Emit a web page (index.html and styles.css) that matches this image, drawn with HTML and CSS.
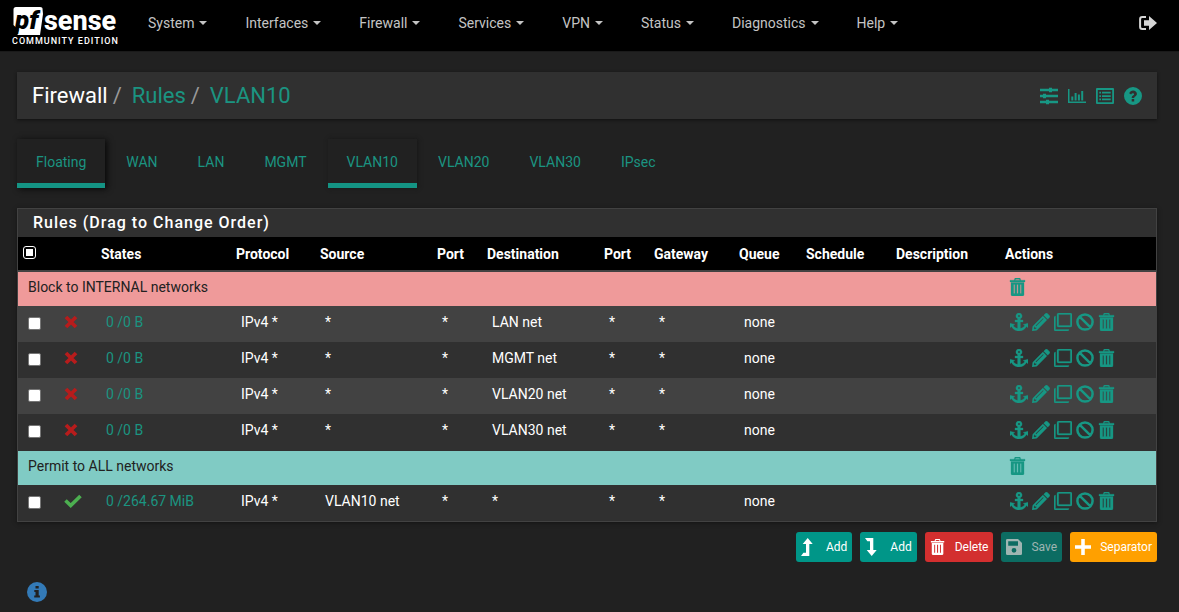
FILE: index.html
```
<!DOCTYPE html>
<html lang="en">
<head>
<meta charset="utf-8">
<title>Firewall: Rules: VLAN10</title>
<link rel="stylesheet" href="styles.css">
</head>
<body>
<svg class="sprite" aria-hidden="true">
  <symbol id="anchor" viewBox="0 0 18 18"><path fill-rule="evenodd" d="M9 0a3 3 0 0 1 1.400 5.700V7H13v2h-2.600v6.300c2.200-.3 3.700-1.300 4.300-2.500L13.200 11.400 18 10.200v4.600l-1.500-1.300C15.200 16.200 12.400 18 9 18s-6.200-1.800-7.500-4.500L0 14.800v-4.600l4.800 1.200-1.500 1.400c.6 1.200 2.100 2.200 4.300 2.500V9H5V7h2.600V5.700A3 3 0 0 1 9 0zm0 1.900a1.100 1.100 0 1 0 0 2.200 1.100 1.100 0 0 0 0-2.200z"/></symbol>
  <symbol id="pencil" viewBox="0 0 18 18"><path fill-rule="evenodd" d="M13.400.6a1.500 1.500 0 0 1 2.100 0l1.900 1.900a1.500 1.500 0 0 1 0 2.100l-1.700 1.700-4-4zM10.900 3.100l4 4L4.800 17.200 0 18l.8-4.800zM11 5.200L3.600 12.600l.6.600L11.600 5.800zM2.200 13.800l-.4 1.600.8.800 1.600-.4V14.600H3v-.8z"/></symbol>
  <symbol id="clone" viewBox="0 0 18 18"><path fill-rule="evenodd" d="M4.500 0h12A1.500 1.500 0 0 1 18 1.500v11a1.500 1.500 0 0 1-1.500 1.500h-12A1.500 1.500 0 0 1 3 12.500v-11A1.500 1.500 0 0 1 4.500 0zm.2 1.600v10.800h11.600V1.600zM0 4.500A1.500 1.500 0 0 1 1.500 3v13.400H15a1.500 1.500 0 0 1-1.500 1.500h-12A1.500 1.500 0 0 1 0 16.400z"/></symbol>
  <symbol id="ban" viewBox="0 0 18 18"><path d="M9 1.400a7.600 7.600 0 1 0 0 15.200A7.600 7.600 0 0 0 9 1.400zM3.800 3.800l10.400 10.400" fill="none" stroke="currentColor" stroke-width="2.500"/></symbol>
  <symbol id="trash" viewBox="0 0 18 18"><path fill-rule="evenodd" d="M6 0h5l.9 2.200H16v1.800H1V2.200h4.100zm.7 1.200l-.4 1h4.400l-.4-1zM2 4.600h13v11.900a1.500 1.500 0 0 1-1.500 1.500h-10A1.500 1.500 0 0 1 2 16.500zM4.700 6.500v9h1.100v-9zm3.200 0v9h1.200v-9zm3.300 0v9h1.100v-9z"/></symbol>
  <symbol id="sliders" viewBox="0 0 18 18"><path d="M0 1.800h9V.8h3v1h6v2.400h-6v1H9v-1H0zM0 7.800h3v-1h3v1h12v2.400H6v1H3v-1H0zM0 13.800h6v-1h3v1h9v2.400H9v1H6v-1H0z"/></symbol>
  <symbol id="chart" viewBox="0 0 18 18"><path d="M0 2h1.500v12.500H18V16H0zM3.300 9.500h2v4h-2zM6.600 6h2v7.500h-2zM9.900 7.500h2v6h-2zM13.200 4h2v9.500h-2z"/></symbol>
  <symbol id="list" viewBox="0 0 18 18"><path fill-rule="evenodd" d="M1 1h16a1 1 0 0 1 1 1v14a1 1 0 0 1-1 1H1a1 1 0 0 1-1-1V2a1 1 0 0 1 1-1zm.8 2v12.200h14.400V3zM3.300 4.800h1.700v1.700H3.300zM6 4.800h8.700v1.700H6zM3.300 8.200h1.700v1.700H3.300zM6 8.200h8.700v1.700H6zM3.300 11.600h1.700v1.700H3.300zM6 11.600h8.700v1.700H6z"/></symbol>
  <symbol id="help" viewBox="0 0 18 18"><path fill-rule="evenodd" d="M9 0a9 9 0 1 1 0 18A9 9 0 0 1 9 0zM5.200 6.300l1.900 1.200c.5-.8 1-1.200 1.800-1.200 1.500 0 1.600 1.300.5 2C8.300 8.900 7.700 9.500 7.700 11h2.500c0-.8.300-1 1-1.500 1-.6 1.700-1.400 1.700-2.700 0-1.900-1.800-3.200-3.800-3.200-1.700 0-3 .9-3.900 2.700zM7.700 12v2.400h2.500V12z"/></symbol>
  <symbol id="logout" viewBox="0 0 18 14"><path d="M7 1.100H3.300A2.200 2.200 0 0 0 1.100 3.300v7.400a2.200 2.200 0 0 0 2.200 2.200H7" fill="none" stroke="currentColor" stroke-width="2"/><path d="M5 4.300h5V0L18 7l-8 7V9.700H5z"/></symbol>
  <symbol id="cross" viewBox="0 0 14 14"><path d="M2 2l10 10M12 2L2 12" stroke="currentColor" stroke-width="3.800"/></symbol>
  <symbol id="check" viewBox="0 0 18 14"><path d="M1.500 6.500l5.200 5L16.500 2" fill="none" stroke="currentColor" stroke-width="3.600"/></symbol>
  <symbol id="up" viewBox="0 0 16 18"><path d="M0 18l2.400-3.200H5V6H1.700L6.700 0l5 6H8.300v12z"/></symbol>
  <symbol id="down" viewBox="0 0 16 18"><path d="M0 0h8.300v12h3.400l-5 6-5-6H5V3.200H2.400z"/></symbol>
  <symbol id="save" viewBox="0 0 18 18"><path fill-rule="evenodd" d="M2 0h11.500L18 4.500V16.500a1.500 1.500 0 0 1-1.500 1.500H1.500A1.500 1.500 0 0 1 0 16.500V1.500A1.500 1.500 0 0 1 1.500 0zm.5 2.500v5h11v-5zM9 10a2.700 2.700 0 1 0 0 5.400A2.700 2.700 0 0 0 9 10z"/></symbol>
  <symbol id="plus" viewBox="0 0 18 18"><path d="M7 0h4v7h7v4h-7v7H7v-7H0V7h7z"/></symbol>
  <symbol id="info" viewBox="0 0 20 20"><circle cx="10" cy="10" r="10"/><path fill="#212121" d="M8.500 4h3.200v2.600H8.500zM7.300 8h4.400v5.600h1.200v2H7.200v-2h1.300V10H7.300z"/></symbol>
</svg>

<header class="navbar">
  <a class="brand" href="#" aria-label="pfSense Community Edition">
    <svg class="mark" viewBox="0 0 106 30">
      <path fill="#fff" d="M4 1h24q3 0 2.600 3L31 8 28 29H5.500l1-5L1.500 19V3.500Q1.500 1 4 1z"/>
      <text class="pf" x="3" y="23">pf</text>
      <text class="sense" x="32" y="24">sense</text>
    </svg>
    <span class="edition">COMMUNITY EDITION</span>
  </a>
  <nav class="menu">
    <a href="#">System</a><a href="#">Interfaces</a><a href="#">Firewall</a><a href="#">Services</a><a href="#">VPN</a><a href="#">Status</a><a href="#">Diagnostics</a><a href="#">Help</a>
  </nav>
  <a class="logout" href="#" aria-label="Log out"><svg><use href="#logout"/></svg></a>
</header>

<main class="page">
  <div class="heading">
    <h1 class="crumbs"><span>Firewall</span><i>/</i><a href="#">Rules</a><i>/</i><a href="#">VLAN10</a></h1>
    <div class="tools">
      <a href="#" aria-label="Settings"><svg><use href="#sliders"/></svg></a>
      <a href="#" aria-label="Statistics"><svg><use href="#chart"/></svg></a>
      <a href="#" aria-label="Logs"><svg><use href="#list"/></svg></a>
      <a href="#" aria-label="Help"><svg><use href="#help"/></svg></a>
    </div>
  </div>

  <nav class="tabs">
    <a class="active hover" href="#">Floating</a><a href="#">WAN</a><a href="#">LAN</a><a href="#">MGMT</a><a class="active" href="#">VLAN10</a><a href="#">VLAN20</a><a href="#">VLAN30</a><a href="#">IPsec</a>
  </nav>

  <section class="panel">
    <h2>Rules (Drag to Change Order)</h2>
    <table>
      <colgroup><col class="w-check"><col class="w-icon"><col class="w-states"><col class="w-proto"><col class="w-addr"><col class="w-port"><col class="w-addr"><col class="w-port"><col class="w-gate"><col class="w-queue"><col class="w-sched"><col class="w-desc"><col></colgroup>
      <thead>
        <tr><th><input class="all" type="checkbox" aria-label="Select all rules"></th><th></th><th>States</th><th>Protocol</th><th>Source</th><th>Port</th><th>Destination</th><th>Port</th><th>Gateway</th><th>Queue</th><th>Schedule</th><th>Description</th><th>Actions</th></tr>
      </thead>
      <tbody>
        <tr class="separator red"><td colspan="12">Block to INTERNAL networks</td><td><div class="actions solo"><a href="#" aria-label="Delete separator"><svg><use href="#trash"/></svg></a></div></td></tr>
        <tr class="odd"><td><input type="checkbox" aria-label="Select LAN rule"></td><td><svg class="cross"><use href="#cross"/></svg></td><td><a href="#">0 /0 B</a></td><td>IPv4 *</td><td>*</td><td>*</td><td>LAN net</td><td>*</td><td>*</td><td>none</td><td></td><td></td><td><div class="actions"><a href="#" aria-label="Move"><svg><use href="#anchor"/></svg></a><a href="#" aria-label="Edit"><svg><use href="#pencil"/></svg></a><a href="#" aria-label="Copy"><svg><use href="#clone"/></svg></a><a href="#" aria-label="Disable"><svg><use href="#ban"/></svg></a><a href="#" aria-label="Delete"><svg><use href="#trash"/></svg></a></div></td></tr>
        <tr><td><input type="checkbox" aria-label="Select MGMT rule"></td><td><svg class="cross"><use href="#cross"/></svg></td><td><a href="#">0 /0 B</a></td><td>IPv4 *</td><td>*</td><td>*</td><td>MGMT net</td><td>*</td><td>*</td><td>none</td><td></td><td></td><td><div class="actions"><a href="#" aria-label="Move"><svg><use href="#anchor"/></svg></a><a href="#" aria-label="Edit"><svg><use href="#pencil"/></svg></a><a href="#" aria-label="Copy"><svg><use href="#clone"/></svg></a><a href="#" aria-label="Disable"><svg><use href="#ban"/></svg></a><a href="#" aria-label="Delete"><svg><use href="#trash"/></svg></a></div></td></tr>
        <tr class="odd"><td><input type="checkbox" aria-label="Select VLAN20 rule"></td><td><svg class="cross"><use href="#cross"/></svg></td><td><a href="#">0 /0 B</a></td><td>IPv4 *</td><td>*</td><td>*</td><td>VLAN20 net</td><td>*</td><td>*</td><td>none</td><td></td><td></td><td><div class="actions"><a href="#" aria-label="Move"><svg><use href="#anchor"/></svg></a><a href="#" aria-label="Edit"><svg><use href="#pencil"/></svg></a><a href="#" aria-label="Copy"><svg><use href="#clone"/></svg></a><a href="#" aria-label="Disable"><svg><use href="#ban"/></svg></a><a href="#" aria-label="Delete"><svg><use href="#trash"/></svg></a></div></td></tr>
        <tr><td><input type="checkbox" aria-label="Select VLAN30 rule"></td><td><svg class="cross"><use href="#cross"/></svg></td><td><a href="#">0 /0 B</a></td><td>IPv4 *</td><td>*</td><td>*</td><td>VLAN30 net</td><td>*</td><td>*</td><td>none</td><td></td><td></td><td><div class="actions"><a href="#" aria-label="Move"><svg><use href="#anchor"/></svg></a><a href="#" aria-label="Edit"><svg><use href="#pencil"/></svg></a><a href="#" aria-label="Copy"><svg><use href="#clone"/></svg></a><a href="#" aria-label="Disable"><svg><use href="#ban"/></svg></a><a href="#" aria-label="Delete"><svg><use href="#trash"/></svg></a></div></td></tr>
        <tr class="separator teal"><td colspan="12">Permit to ALL networks</td><td><div class="actions solo"><a href="#" aria-label="Delete separator"><svg><use href="#trash"/></svg></a></div></td></tr>
        <tr><td><input type="checkbox" aria-label="Select permit rule"></td><td><svg class="check"><use href="#check"/></svg></td><td><a href="#">0 /264.67 MiB</a></td><td>IPv4 *</td><td>VLAN10 net</td><td>*</td><td>*</td><td>*</td><td>*</td><td>none</td><td></td><td></td><td><div class="actions"><a href="#" aria-label="Move"><svg><use href="#anchor"/></svg></a><a href="#" aria-label="Edit"><svg><use href="#pencil"/></svg></a><a href="#" aria-label="Copy"><svg><use href="#clone"/></svg></a><a href="#" aria-label="Disable"><svg><use href="#ban"/></svg></a><a href="#" aria-label="Delete"><svg><use href="#trash"/></svg></a></div></td></tr>
      </tbody>
    </table>
  </section>

  <div class="buttons">
    <button type="button"><svg><use href="#up"/></svg>Add</button>
    <button type="button"><svg><use href="#down"/></svg>Add</button>
    <button type="button" class="danger"><svg><use href="#trash"/></svg>Delete</button>
    <button type="button" disabled><svg><use href="#save"/></svg>Save</button>
    <button type="button" class="warning"><svg><use href="#plus"/></svg>Separator</button>
  </div>

  <a class="info" href="#" aria-label="Information"><svg><use href="#info"/></svg></a>
</main>
</body>
</html>
```
FILE: styles.css
```
* { box-sizing: border-box; }

body {
  margin: 0;
  background: #212121;
  color: #fff;
  font: 14px/20px Roboto, sans-serif;
}

a { color: #1b9481; text-decoration: none; }
svg { display: block; fill: currentColor; }
.sprite { display: none; }

/* Top bar */
.navbar {
  display: flex;
  align-items: center;
  height: 52px;
  padding: 0 22px 0 12px;
  background: #000;
  border-bottom: 1px solid #1a1a1a;
}
.brand {
  display: flex;
  flex-direction: column;
  width: 106px;
  margin-right: 30px;
  padding-top: 1px;
  color: #fff;
}
.mark { width: 106px; height: 30px; }
.pf { font: italic 900 26px Roboto, sans-serif; fill: #000; }
.sense { font: 800 27px Roboto, sans-serif; fill: #fff; }
.edition { font-size: 9px; font-weight: 500; line-height: 11px; letter-spacing: 1px; white-space: nowrap; }
.menu { display: flex; gap: 38px; padding-bottom: 6px; }
.menu a { display: flex; align-items: center; gap: 5px; color: #c4c4c4; }
.menu a::after {
  content: "";
  border: 4px solid transparent;
  border-top-color: currentColor;
  border-bottom: 0;
}
.logout { margin-left: auto; padding-bottom: 5px; color: #d6d6d6; }
.logout svg { width: 18px; height: 14px; }

.page { padding: 20px 22px 10px 17px; }

/* Page heading */
.heading {
  display: flex;
  align-items: center;
  justify-content: space-between;
  height: 47px;
  padding: 0 15px;
  background: #303030;
  box-shadow: 0 1px 3px #111;
}
.crumbs { display: flex; margin: 0; font-size: 22px; font-weight: 400; line-height: 26px; }
.crumbs i { margin: 0 10px 0 5px; color: #999; font-style: normal; }
.tools { display: flex; gap: 10px; }
.tools a { color: #179784; }
.tools svg { width: 18px; height: 18px; }

/* Tabs */
.tabs { display: flex; gap: 2px; margin-top: 20px; }
.tabs a { height: 49px; padding: 13px 19px 0; }
.tabs .active { border-bottom: 5px solid #149484; box-shadow: 1px 0 4px #161616; }
.tabs .hover { box-shadow: 2px 1px 6px #080808; }

/* Rules table */
.panel {
  margin-top: 20px;
  background: #303030;
  border: 1px solid #424242;
  box-shadow: 0 1px 4px #141414;
}
.panel h2 {
  margin: 0;
  padding: 4px 15px;
  font-size: 16px;
  font-weight: 500;
  line-height: 20px;
  letter-spacing: 1px;
}
table { width: 100%; border-collapse: separate; border-spacing: 0; table-layout: fixed; }
.w-check { width: 36px; }
.w-icon { width: 42px; }
.w-states { width: 135px; }
.w-proto { width: 84px; }
.w-addr { width: 117px; }
.w-port { width: 50px; }
.w-gate { width: 85px; }
.w-queue { width: 67px; }
.w-sched { width: 90px; }
.w-desc { width: 109px; }
th {
  height: 35px;
  padding: 0 5px;
  background: #000;
  border-bottom: 2px solid #424242;
  font-weight: 700;
  text-align: left;
  white-space: nowrap;
}
td {
  height: 36px;
  padding: 5px 10px 0;
  border-top: 1px solid #303030;
  font-weight: 400;
  vertical-align: top;
  white-space: nowrap;
}
.odd td { background: #424242; border-color: #424242; }
.separator td { height: 35px; color: #212121; }
.red td { height: 34px; padding-top: 4px; background: #ef9a9a; border-color: #ef9a9a; }
.teal td { background: #80cbc4; }

input {
  display: grid;
  place-content: center;
  appearance: none;
  width: 13px;
  height: 13px;
  margin: 5px 0 0;
  background: #fff;
  border: 1px solid #767676;
  border-radius: 2px;
}
.all { margin: 0 0 2px; background: #000; border: 1px solid #fff; border-radius: 3px; }
.all::before { content: ""; width: 7px; height: 7px; background: #fff; }

.cross { width: 14px; height: 14px; margin-top: 3px; color: #b71c1c; }
.check { width: 18px; height: 14px; margin-top: 3px; color: #4caf50; }
.actions { display: flex; gap: 4px; padding-top: 1px; }
.actions a { color: #179784; }
.actions svg { width: 18px; height: 18px; stroke: currentColor; stroke-width: 0.3; }
.solo { margin-left: -1px; }

/* Buttons under the table */
.buttons { display: flex; justify-content: flex-end; flex-wrap: wrap; gap: 8px; margin-top: 10px; }
button {
  display: flex;
  align-items: center;
  gap: 9px;
  height: 30px;
  padding: 0 5px;
  background: #009688;
  border: 0;
  border-radius: 3px;
  color: #fff;
  font: 400 12px/18px Roboto, sans-serif;
}
button svg { width: 16px; height: 18px; }
button:disabled { background: #0c6c62; color: #9fb5b2; }
.danger { background: #d32f2f; }
.warning { background: #ffa000; }

.info { display: inline-block; margin: 20px 0 0 10px; color: #337ab7; }
.info svg { width: 20px; height: 20px; }
```
